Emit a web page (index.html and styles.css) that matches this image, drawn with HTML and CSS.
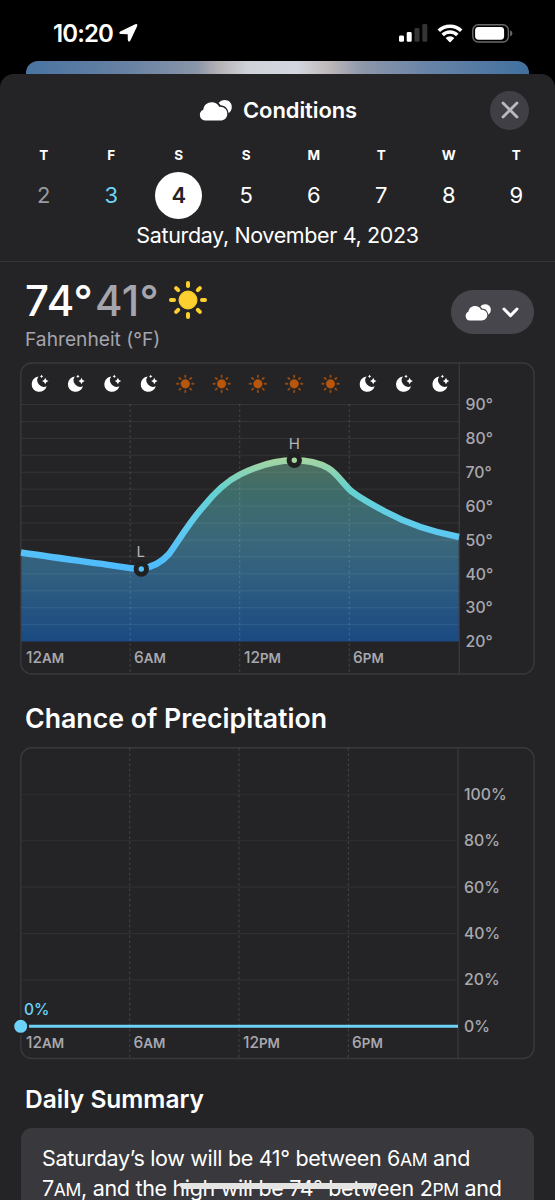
FILE: index.html
```html
<!DOCTYPE html>
<html lang="en">
<head>
<meta charset="UTF-8">
<title>Conditions</title>
<link rel="stylesheet" href="styles.css">
</head>
<body>

<!-- shared icons -->
<svg class="defs">
  <symbol id="cloud" viewBox="0 0 33 21">
    <path d="M6 20.6 A5.7 5.7 0 0 1 4.3 9.7 C4.9 5.2 8.2 2.3 12.7 2.3 C16.2 2.3 19 4 20.4 6.9 C24.9 6.5 28.3 9.6 28.3 13.7 C28.3 17.6 25.3 20.6 21.4 20.6 Z"/>
    <path d="M19.6 3.1 C21.2 1 23.3 .1 25.8 .1 C29.7 .1 32.8 3 32.8 6.9 C32.8 9.8 31.4 12 29.4 13 C29.2 8.6 26 5.5 21.5 5.3 C21 4.5 20.4 3.8 19.6 3.1 Z"/>
  </symbol>
  <symbol id="moon" viewBox="0 0 18 18">
    <path d="M7.2 2 A7.7 7.7 0 1 0 15.4 11.7 A6.6 6.6 0 0 1 7.2 2 Z"/>
    <path d="M13.9 3.2 Q14.3 5.7 17.2 6.4 Q14.3 7 13.9 9.8 Q13.4 7 10.8 6.4 Q13.4 5.7 13.9 3.2 Z"/>
    <path d="M10.3 0 Q10.6 1.5 12 1.8 Q10.6 2.1 10.3 3.7 Q10 2.1 8.6 1.8 Q10 1.5 10.3 0 Z"/>
  </symbol>
  <symbol id="sun" viewBox="-19 -19 38 38">
    <circle r="9"/>
    <path class="rays" d="M0 -17V-14M0 17V14M-17 0H-14M17 0H14M-11.9 -11.9L-9.8 -9.8M11.9 11.9L9.8 9.8M-11.9 11.9L-9.8 9.8M11.9 -11.9L9.8 -9.8"/>
  </symbol>
</svg>

<div class="status">
  <span class="clock">10:20</span>
  <svg class="arrow" width="19" height="20" viewBox="0 0 19 20"><path d="M1.2 8.6 L16.2 1.3 Q19 .4 18.1 3.2 L11.4 17.6 Q9.7 20 8.8 17 L8.7 11.2 L2 11.1 Q-1 10.4 1.2 8.6 Z"/></svg>
  <svg class="signal" width="29" height="18" viewBox="0 0 29 18">
    <rect x="0" y="11.5" width="5" height="6.3" rx="1.4"/>
    <rect x="7.7" y="8" width="5" height="9.8" rx="1.4"/>
    <rect class="off" x="15.5" y="4" width="5" height="13.8" rx="1.4"/>
    <rect class="off" x="23.3" y="0" width="5" height="17.8" rx="1.4"/>
  </svg>
  <svg class="wifi" width="26" height="19" viewBox="0 0 26 19">
    <path class="arc" d="M1.8 6.8 A16 16 0 0 1 24.2 6.8 M5.7 11 A10.4 10.4 0 0 1 20.3 11"/>
    <path d="M8.6 14 A6.5 6.5 0 0 1 17.4 14 L13.6 18 Q13 18.6 12.4 18 Z"/>
  </svg>
  <svg class="battery" width="41" height="19" viewBox="0 0 41 19">
    <rect class="shell" x=".8" y=".8" width="35.6" height="17.2" rx="5.4"/>
    <rect x="3.1" y="3.1" width="29" height="12.6" rx="3.4"/>
    <path class="cap" d="M38.2 6.3 Q40.4 7.3 40.4 9.4 Q40.4 11.5 38.2 12.5 Z"/>
  </svg>
</div>

<div class="behind"></div>

<div class="sheet">
  <div class="header">
    <svg class="cloud" width="33" height="21"><use href="#cloud"/></svg>
    <span class="title">Conditions</span>
    <div class="close">
      <svg width="18" height="18" viewBox="0 0 18 18"><path d="M2 2L16 16M16 2L2 16"/></svg>
    </div>
  </div>

  <div class="week">
    <div class="day past"><b>T</b><span>2</span></div>
    <div class="day today"><b>F</b><span>3</span></div>
    <div class="day selected"><b>S</b><span>4</span></div>
    <div class="day"><b>S</b><span>5</span></div>
    <div class="day"><b>M</b><span>6</span></div>
    <div class="day"><b>T</b><span>7</span></div>
    <div class="day"><b>W</b><span>8</span></div>
    <div class="day"><b>T</b><span>9</span></div>
  </div>
  <div class="date"><span>Saturday, November 4, 2023</span></div>

  <div class="current">
    <div>
      <div class="temps">
        <span class="high">74°</span><span class="low">41°</span>
        <svg class="sun" width="38" height="38"><use href="#sun"/></svg>
      </div>
      <div class="unit">Fahrenheit (°F)</div>
    </div>
    <div class="picker">
      <svg class="cloud" width="26" height="17"><use href="#cloud"/></svg>
      <svg class="chevron" width="17" height="11" viewBox="0 0 17 11"><path d="M2 2L8.5 8.6L15 2"/></svg>
    </div>
  </div>

  <!-- temperature -->
  <svg class="chart" width="555" height="314" viewBox="0 362 555 314">
    <defs>
      <linearGradient id="line" gradientUnits="userSpaceOnUse" x1="0" y1="458" x2="0" y2="570">
        <stop offset="0" stop-color="#a6d6a0"/>
        <stop offset=".12" stop-color="#8bd3b2"/>
        <stop offset=".28" stop-color="#66d2d0"/>
        <stop offset=".6" stop-color="#60ccec"/>
        <stop offset="1" stop-color="#4dbaff"/>
      </linearGradient>
      <linearGradient id="area" gradientUnits="userSpaceOnUse" x1="0" y1="460" x2="0" y2="641">
        <stop offset="0" stop-color="#50705f"/>
        <stop offset=".18" stop-color="#3e6c69"/>
        <stop offset=".45" stop-color="#3a677a"/>
        <stop offset=".65" stop-color="#2f5e80"/>
        <stop offset="1" stop-color="#1b4a82"/>
      </linearGradient>
      <pattern id="rows" patternUnits="userSpaceOnUse" x="0" y="404" width="10" height="16.93">
        <rect width="10" height="1"/>
      </pattern>
    </defs>
    <path fill="url(#area)" d="M21 552.5 C50 557 100 563.5 125 567.3 C131 568.2 136 568.6 141 568.5 C152 567.5 161 563 169 554 C176 545 188 524 203 507 C215 492 227 481 240 474.5 C256 466.5 275 460.5 294 460.3 C307 460.3 318 462.5 328 468 C337 473.5 341 481 349 489 C356 496 372 504.5 385 511.5 C408 524 430 531.5 459 537 V641.5 H21 Z"/>
    <rect x="21" y="404" width="438" height="237" fill="url(#rows)"/>
    <rect class="frame" x="20.8" y="363" width="513.2" height="311" rx="11"/>
    <path class="frame" d="M459.3 363V674"/>
    <path class="dash" d="M130.2 404V674M239.7 404V674M349.3 404V674"/>
    <path class="curve" d="M21 552.5 C50 557 100 563.5 125 567.3 C131 568.2 136 568.6 141 568.5 C152 567.5 161 563 169 554 C176 545 188 524 203 507 C215 492 227 481 240 474.5 C256 466.5 275 460.5 294 460.3 C307 460.3 318 462.5 328 468 C337 473.5 341 481 349 489 C356 496 372 504.5 385 511.5 C408 524 430 531.5 459 537"/>
    <circle class="ring" cx="141.3" cy="569" r="5.2" fill="#55c1fb"/>
    <circle class="ring" cx="294.3" cy="460.3" r="5.2" fill="#a6d6a0"/>
    <g class="mark">
      <text x="140.7" y="557">L</text>
      <text x="294.3" y="449">H</text>
    </g>
    <g class="moons">
      <use href="#moon" x="31.3" y="374.5" width="18" height="18"/>
      <use href="#moon" x="67.6" y="374.5" width="18" height="18"/>
      <use href="#moon" x="104" y="374.5" width="18" height="18"/>
      <use href="#moon" x="140.4" y="374.5" width="18" height="18"/>
      <use href="#moon" x="359.3" y="374.5" width="18" height="18"/>
      <use href="#moon" x="395.7" y="374.5" width="18" height="18"/>
      <use href="#moon" x="432.1" y="374.5" width="18" height="18"/>
    </g>
    <g class="suns">
      <use href="#sun" x="176" y="374.5" width="18.6" height="18.6"/>
      <use href="#sun" x="212.3" y="374.5" width="18.6" height="18.6"/>
      <use href="#sun" x="248.6" y="374.5" width="18.6" height="18.6"/>
      <use href="#sun" x="284.9" y="374.5" width="18.6" height="18.6"/>
      <use href="#sun" x="321.2" y="374.5" width="18.6" height="18.6"/>
    </g>
    <g class="axis">
      <text x="465.5" y="410.3">90°</text>
      <text x="465.5" y="444.1">80°</text>
      <text x="465.5" y="478">70°</text>
      <text x="465.5" y="511.8">60°</text>
      <text x="465.5" y="545.7">50°</text>
      <text x="465.5" y="579.5">40°</text>
      <text x="465.5" y="613.4">30°</text>
      <text x="465.5" y="647.3">20°</text>
    </g>
    <g class="axis hours">
      <text x="26" y="663">12<tspan>AM</tspan></text>
      <text x="134" y="663">6<tspan>AM</tspan></text>
      <text x="244" y="663">12<tspan>PM</tspan></text>
      <text x="353" y="663">6<tspan>PM</tspan></text>
    </g>
  </svg>

  <h2 class="precip">Chance of Precipitation</h2>

  <!-- precipitation -->
  <svg class="chart" width="555" height="313" viewBox="0 747 555 313">
    <rect class="frame" x="20.8" y="747.8" width="513.2" height="310.7" rx="11"/>
    <path class="frame" d="M458 748V1058"/>
    <path class="grid" d="M21 794.3H458M21 840.7H458M21 887H458M21 933.5H458M21 980H458"/>
    <path class="dash" d="M129.7 748V1058M239 748V1058M348.4 748V1058"/>
    <path class="rain" d="M21 1026.3H458"/>
    <circle class="dot" cx="20.7" cy="1026.3" r="7.5"/>
    <text class="now" x="24" y="1015">0%</text>
    <g class="axis">
      <text x="464" y="799.7">100%</text>
      <text x="464" y="846.2">80%</text>
      <text x="464" y="892.6">60%</text>
      <text x="464" y="939">40%</text>
      <text x="464" y="985.4">20%</text>
      <text x="464" y="1031.8">0%</text>
    </g>
    <g class="axis hours">
      <text x="26" y="1048">12<tspan>AM</tspan></text>
      <text x="133.5" y="1048">6<tspan>AM</tspan></text>
      <text x="243" y="1048">12<tspan>PM</tspan></text>
      <text x="352" y="1048">6<tspan>PM</tspan></text>
    </g>
  </svg>

  <h2 class="daily">Daily Summary</h2>
  <div class="summary">
    <div>Saturday’s low will be 41° between 6<small>AM</small> and</div>
    <div>7<small>AM</small>, and the high will be 74° between 2<small>PM</small> and</div>
  </div>
</div>

<div class="home"></div>

</body>
</html>
```
FILE: styles.css
```css
* {
  box-sizing: border-box;
}
body {
  margin: 0;
  width: 555px;
  height: 1200px;
  overflow: hidden;
  background: #000;
  color: #fff;
  font-family: Inter, "Liberation Sans", sans-serif;
}
svg {
  display: block;
  fill: #fff;
}
.defs {
  position: absolute;
  width: 0;
  height: 0;
}

/* Status bar */
.status {
  display: flex;
  align-items: center;
  height: 61px;
  padding: 5px 42px 0 53px;
}
.clock {
  font-size: 24px;
  font-weight: 600;
  letter-spacing: -0.9px;
}
.arrow {
  margin-left: 6px;
}
.signal {
  margin-left: auto;
}
.signal .off {
  fill: #343434;
}
.wifi {
  margin-left: 9px;
}
.wifi .arc {
  fill: none;
  stroke: #fff;
  stroke-width: 3.6;
}
.battery {
  margin-left: 9px;
}
.battery .shell {
  fill: none;
  stroke: #6a6a6a;
  stroke-width: 1.4;
}
.battery .cap {
  fill: #6a6a6a;
}

/* Page behind the sheet */
.behind {
  height: 13px;
  margin: 0 26px;
  border-radius: 12px 12px 0 0;
  background: linear-gradient(90deg, #4a74a2 0%, #6781a3 20%, #8a95a8 34%, #b4b0b4 38%, #cfd2d9 44%, #d3d6de 54%, #bfb9ba 60%, #8d97aa 67%, #6883a7 80%, #41709f 100%);
}

.sheet {
  height: 1126px;
  overflow: hidden;
  border-radius: 14px 14px 0 0;
  background: #242426;
}
.header {
  display: flex;
  align-items: center;
  height: 72px;
  padding: 0 26px 0 199px;
}
.title {
  margin-left: 11px;
  font-size: 22px;
  font-weight: 600;
  letter-spacing: -0.1px;
}
.close {
  display: flex;
  align-items: center;
  justify-content: center;
  width: 39px;
  height: 39px;
  margin-left: auto;
  border-radius: 50%;
  background: #403f45;
}
.close path {
  fill: none;
  stroke: #bbbac0;
  stroke-width: 2.8;
  stroke-linecap: round;
}

/* Days */
.week {
  display: grid;
  grid-template-columns: repeat(8, 1fr);
  height: 74px;
  padding: 0 5px 0 10px;
}
.day {
  display: flex;
  flex-direction: column;
  align-items: center;
}
.day b {
  height: 26px;
  font-size: 13.5px;
  font-weight: 700;
  line-height: 18px;
}
.day span {
  width: 47px;
  height: 47px;
  border-radius: 50%;
  font-size: 22px;
  line-height: 47px;
  text-align: center;
}
.past span {
  color: #9a9a9e;
}
.today span {
  color: #6cd3f7;
}
.selected span {
  background: #fff;
  color: #242426;
  font-weight: 600;
}
.date {
  height: 42px;
  border-bottom: 1px solid #363638;
  font-size: 21.5px;
  letter-spacing: -0.36px;
  line-height: 31px;
  text-align: center;
}

/* Temperatures */
.current {
  display: flex;
  justify-content: space-between;
  height: 100px;
  padding: 12px 21px 0 25px;
}
.temps {
  display: flex;
  align-items: center;
  height: 52px;
  font-size: 42px;
  font-weight: 500;
}
.high {
  letter-spacing: 0.2px;
}
.low {
  margin-left: 2px;
  letter-spacing: 0.4px;
  color: #a5a5ad;
}
.sun {
  margin-left: 10px;
  fill: #fdd02f;
  stroke: #fdd02f;
}
.rays {
  stroke-width: 4;
  stroke-linecap: round;
}
.unit {
  font-size: 19.2px;
  line-height: 27px;
  color: #a5a5ad;
}
.picker {
  display: flex;
  align-items: center;
  width: 83px;
  height: 44px;
  margin-top: 16px;
  padding-left: 14px;
  border-radius: 22px;
  background: #47464c;
}
.chevron {
  margin-left: 11px;
  fill: none;
  stroke: #fff;
  stroke-width: 3;
  stroke-linecap: round;
  stroke-linejoin: round;
}

/* Charts */
.frame {
  fill: none;
  stroke: #39393c;
  stroke-width: 1.4;
}
.grid {
  fill: none;
  stroke: #303032;
}
#rows rect {
  fill: rgba(255, 255, 255, 0.07);
}
.dash {
  fill: none;
  stroke: rgba(255, 255, 255, 0.13);
  stroke-width: 1.2;
  stroke-dasharray: 2.6 2.6;
}
.curve {
  fill: none;
  stroke: url(#line);
  stroke-width: 6.4;
}
.ring {
  stroke: #202022;
  stroke-width: 5;
}
.mark text {
  font-size: 15px;
  fill: #b4b4b8;
  text-anchor: middle;
}
.suns {
  fill: #b8560c;
  stroke: #b8560c;
  stroke-opacity: 0.75;
}
.axis {
  font-size: 15.8px;
  font-weight: 500;
  fill: #a8a8ae;
}
.hours {
  font-size: 15.5px;
}
.hours tspan {
  font-size: 13.4px;
  font-weight: 600;
}
.rain {
  stroke: #6cd2f8;
  stroke-width: 3;
}
.dot {
  fill: #6cd2f8;
  stroke: #242426;
  stroke-width: 2;
}
.now {
  font-size: 15.5px;
  font-weight: 500;
  fill: #6cd2f8;
}

h2 {
  margin: 0;
  padding-left: 25px;
  font-weight: 600;
}
.precip {
  height: 71px;
  font-size: 26.7px;
  line-height: 84px;
}
.daily {
  height: 68px;
  font-size: 24.5px;
  line-height: 79px;
}
.summary {
  height: 100px;
  margin: 0 21px;
  padding: 16px 21px 0;
  border-radius: 11px;
  background: #39383d;
  font-size: 21.5px;
  letter-spacing: -0.32px;
  line-height: 28px;
  white-space: nowrap;
}
.summary small {
  font-size: 17.5px;
}

/* Home indicator lies over the page */
.home {
  position: absolute;
  left: 178px;
  top: 1183px;
  width: 199px;
  height: 6px;
  border-radius: 3px 0 0 3px;
  background: #e4e4e2;
  clip-path: polygon(0 0, 100% 0, 98% 100%, 2% 100%);
}
```
